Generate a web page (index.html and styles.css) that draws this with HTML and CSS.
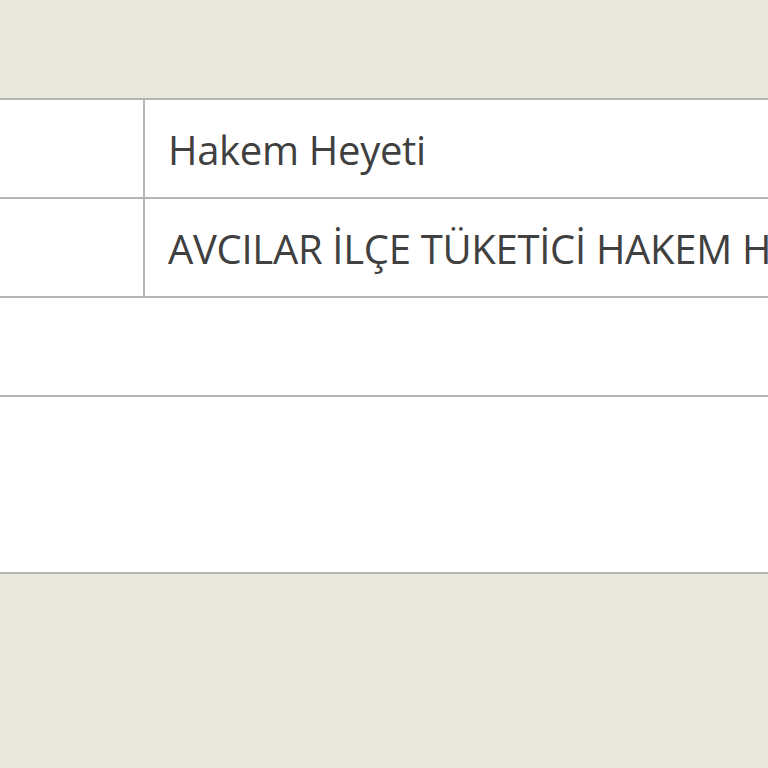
FILE: index.html
```html
<!DOCTYPE html>
<html lang="tr">
<head>
<meta charset="utf-8">
<link rel="stylesheet" href="styles.css">
</head>
<body>
<div class="top"></div>
<div class="panel">
  <div class="row">
    <div class="label"></div>
    <div class="value">Hakem Heyeti</div>
  </div>
  <div class="row">
    <div class="label"></div>
    <div class="value">AVCILAR İLÇE TÜKETİCİ HAKEM HEYETİ</div>
  </div>
  <div class="blank"></div>
  <div class="footer"></div>
</div>
</body>
</html>
```

FILE: styles.css
```css
html, body {
  margin: 0;
  padding: 0;
  background: #e9e8df;
  font-family: "Open Sans", "Noto Sans", sans-serif;
  overflow: hidden;
}
.top {
  height: 98px;
}
.panel {
  background: #ffffff;
  border-top: 2px solid #b5b5b5;
  border-bottom: 2px solid #b5b5b5;
}
.row {
  display: flex;
  height: 97px;
  border-bottom: 2px solid #b5b5b5;
}
.label {
  width: 143px;
  flex: none;
  border-right: 2px solid #b5b5b5;
}
.value {
  flex: 1;
  padding-left: 23px;
  padding-top: 2px;
  display: flex;
  align-items: center;
  white-space: nowrap;
  overflow: hidden;
  font-size: 40px;
  letter-spacing: -0.3px;
  color: #404040;
}
.blank {
  height: 97px;
  border-bottom: 2px solid #b5b5b5;
}
.footer {
  height: 175px;
}
```
